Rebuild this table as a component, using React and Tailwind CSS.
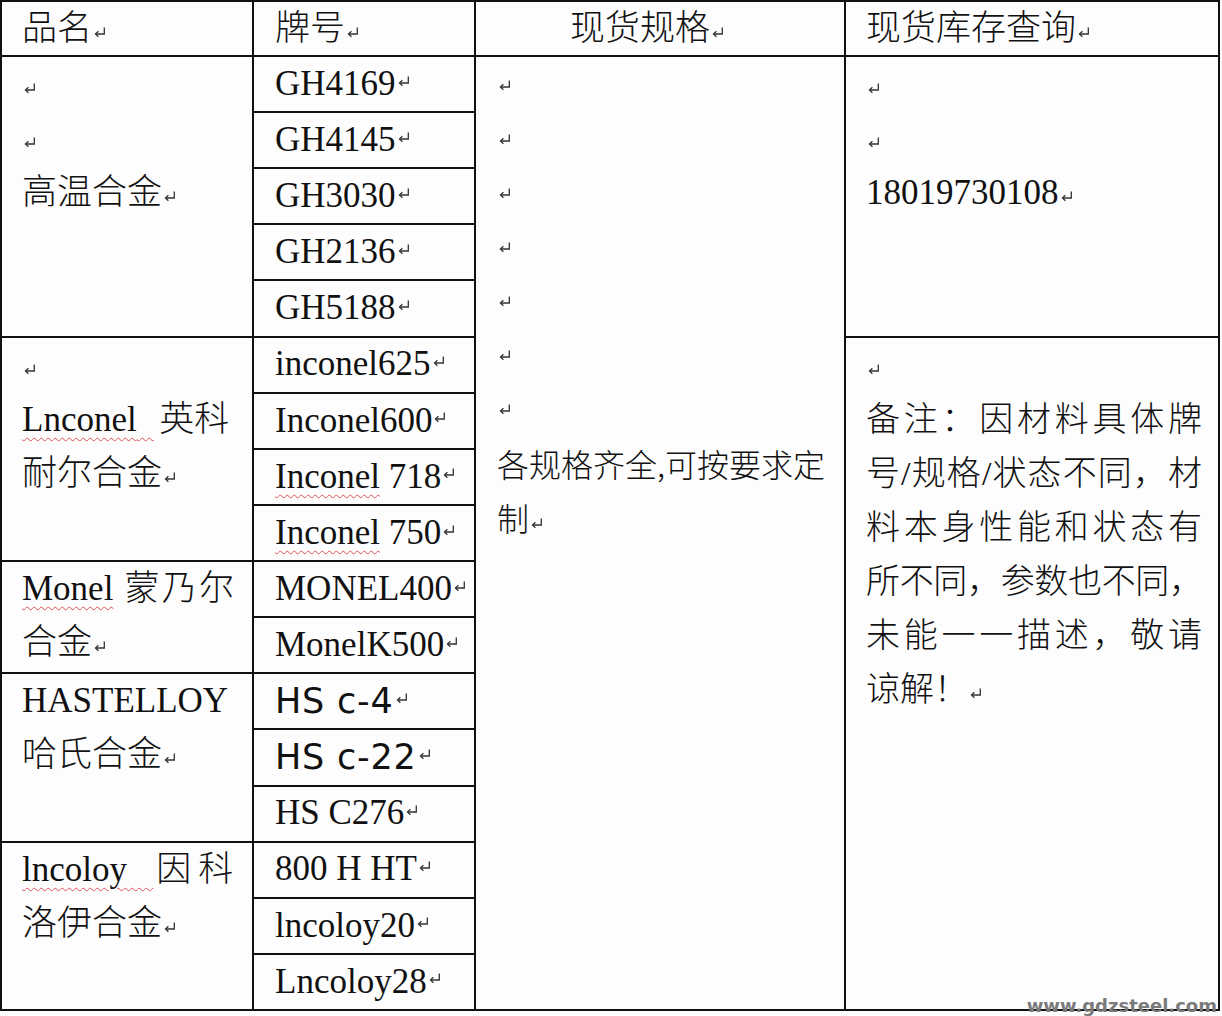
import React from "react";

// Word-style paragraph mark
const Mark = ({ className = "align-[2px]" }) => (
  <svg
    viewBox="0 0 12 11"
    className={`inline-block w-[12px] h-[11px] ml-[2px] text-[#333] ${className}`}
    fill="none"
    stroke="currentColor"
    strokeWidth="1.3"
  >
    <path d="M10.3 0.5 V7 H1.6" />
    <path d="M4.4 4.3 L1.5 7 L4.4 9.8" />
  </svg>
);

const Wavy = ({ children }) => (
  <span className="underline decoration-wavy decoration-[#e05050] decoration-1 underline-offset-[6px]">
    {children}
  </span>
);

const serif = "font-['Liberation_Serif','Noto_Sans_CJK_SC',serif]";

const Line = ({ children, justify, className = "" }) => (
  <div
    className={`h-[54px] leading-[54px] whitespace-nowrap ${
      justify ? "text-justify [text-align-last:justify]" : ""
    } ${className}`}
  >
    {children}
  </div>
);

const grades = [
  "GH4169",
  "GH4145",
  "GH3030",
  "GH2136",
  "GH5188",
  "inconel625",
  "Inconel600",
  <>
    <Wavy>Inconel</Wavy> 718
  </>,
  <>
    <Wavy>Inconel</Wavy> 750
  </>,
  "MONEL400",
  "MonelK500",
  "HS c-4",
  "HS c-22",
  "HS C276",
  "800 H HT",
  "lncoloy20",
  "Lncoloy28",
];

const rowStart = [
  "row-start-2",
  "row-start-3",
  "row-start-4",
  "row-start-5",
  "row-start-6",
  "row-start-7",
  "row-start-8",
  "row-start-9",
  "row-start-10",
  "row-start-11",
  "row-start-12",
  "row-start-13",
  "row-start-14",
  "row-start-15",
  "row-start-16",
  "row-start-17",
  "row-start-18",
];

export default function App() {
  return (
    <div className="relative w-[1222px] h-[1016px] bg-[#fdfdfe] text-[#111]">
      <div
        className={`grid w-[1220px] h-[1011px] bg-[#111] p-[2px] gap-[2px] grid-cols-[250px_220px_368px_372px] grid-rows-[53px_repeat(17,1fr)] ${serif} text-[35px] font-light`}
      >
        {/* header */}
        <div className="col-start-1 row-start-1 bg-[#fdfdfe] pl-[20px] leading-[53px]">
          品名<Mark />
        </div>
        <div className="col-start-2 row-start-1 bg-[#fdfdfe] pl-[21px] leading-[53px]">
          牌号<Mark />
        </div>
        <div className="col-start-3 row-start-1 bg-[#fdfdfe] text-center pr-[26px] leading-[53px]">
          现货规格<Mark />
        </div>
        <div className="col-start-4 row-start-1 bg-[#fdfdfe] pl-[20px] leading-[53px]">
          现货库存查询<Mark />
        </div>

        {/* 品名 column */}
        <div className="col-start-1 row-start-2 row-span-5 bg-[#fdfdfe] pl-[20px] pr-[18px] pt-[1px]">
          <Line><Mark /></Line>
          <Line><Mark /></Line>
          <Line>高温合金<Mark /></Line>
        </div>
        <div className="col-start-1 row-start-7 row-span-4 bg-[#fdfdfe] pl-[20px] pr-[18px] pt-[1px]">
          <Line><Mark /></Line>
          <Line>
            <Wavy>Lnconel{"\u00a0\u00a0"}</Wavy>
            <span className="ml-[5px]">英科</span>
          </Line>
          <Line>耐尔合金<Mark /></Line>
        </div>
        <div className="col-start-1 row-start-11 row-span-2 bg-[#fdfdfe] pl-[20px] pr-[18px]">
          <Line justify><Wavy>Monel</Wavy> 蒙乃尔</Line>
          <Line>合金<Mark /></Line>
        </div>
        <div className="col-start-1 row-start-13 row-span-3 bg-[#fdfdfe] pl-[20px] pr-[18px]">
          <Line>HASTELLOY</Line>
          <Line>哈氏合金<Mark /></Line>
        </div>
        <div className="col-start-1 row-start-16 row-span-3 bg-[#fdfdfe] pl-[20px] pr-[18px]">
          <Line>
            <Wavy>lncoloy{"\u00a0\u00a0\u00a0"}</Wavy>
            <span className="ml-[3px]">因</span>
            <span className="ml-[7px]">科</span>
          </Line>
          <Line>洛伊合金<Mark /></Line>
        </div>

        {/* 牌号 column */}
        {grades.map((g, i) => {
          const sans = i === 11 || i === 12;
          return (
            <div
              key={i}
              className={`col-start-2 ${rowStart[i]} bg-[#fdfdfe] pl-[21px] flex items-center whitespace-nowrap`}
            >
              <span
                className={
                  sans
                    ? "font-['DejaVu_Sans',sans-serif] text-[35px] tracking-[0.8px] font-normal"
                    : ""
                }
              >
                {g}
              </span>
              <span className="self-end mb-[16px] leading-none">
                <Mark className="" />
              </span>
            </div>
          );
        })}

        {/* 现货规格 column */}
        <div className="col-start-3 row-start-2 row-span-17 bg-[#fdfdfe] pl-[21px] pr-[14px] pt-[1px] font-['Noto_Sans_CJK_SC',sans-serif] text-[32px] font-light">
          {[0, 1, 2, 3, 4, 5, 6].map((k) => (
            <Line key={k}>
              <Mark className="align-[8px]" />
            </Line>
          ))}
          <Line>各规格齐全,可按要求定</Line>
          <Line>制<Mark /></Line>
        </div>

        {/* 现货库存查询 column */}
        <div className="col-start-4 row-start-2 row-span-5 bg-[#fdfdfe] pl-[20px] pt-[1px]">
          <Line><Mark /></Line>
          <Line><Mark /></Line>
          <Line>18019730108<Mark /></Line>
        </div>
        <div className="col-start-4 row-start-7 row-span-12 bg-[#fdfdfe] pl-[20px] pr-[16px] pt-[1px] text-[34px]">
          <Line><Mark /></Line>
          <Line justify>备注：因材料具体牌</Line>
          <Line justify>号/规格/状态不同，材</Line>
          <Line justify>料本身性能和状态有</Line>
          <Line justify className="tracking-[-1px]">所不同，参数也不同，</Line>
          <Line justify>未能一一描述，敬请</Line>
          <Line>谅解！<Mark /></Line>
        </div>
      </div>

      {/* watermark */}
      <div className="absolute right-[5px] bottom-0 font-['DejaVu_Sans',sans-serif] font-bold text-[18px] leading-[20px] text-[#7a7a7a]">
        www.gdzsteel.com
      </div>
    </div>
  );
}
